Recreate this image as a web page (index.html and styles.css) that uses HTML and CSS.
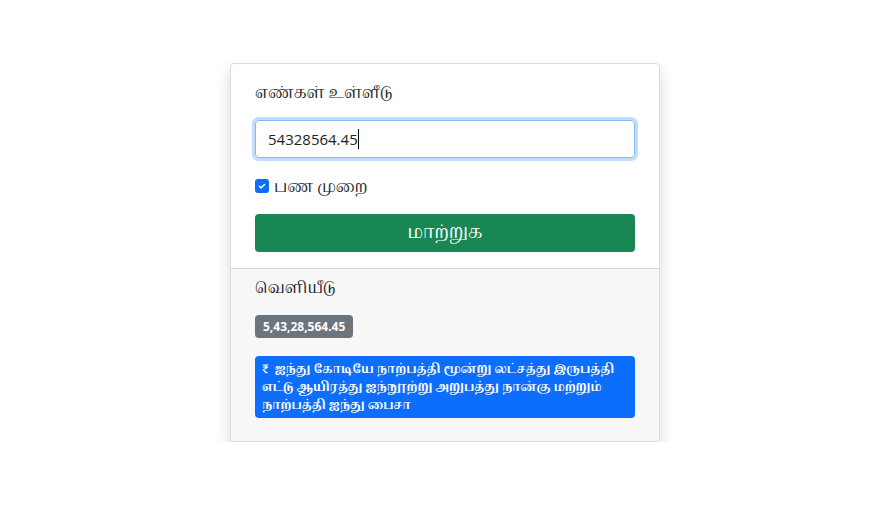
FILE: index.html
```html
<!DOCTYPE html>
<html lang="ta">
<head>
<meta charset="utf-8">
<link rel="stylesheet" href="styles.css">
</head>
<body>
<div class="wrap">
  <div class="card">
    <div class="card-body">
      <label class="lbl">எண்கள் உள்ளீடு</label>
      <div class="input"><span class="val">54328564.45</span><span class="caret"></span></div>
      <div class="check">
        <span class="box"><svg width="10" height="10" viewBox="0 0 20 20"><path d="M5 10.5l3.2 3.2L15 7" fill="none" stroke="#fff" stroke-width="3" stroke-linecap="round" stroke-linejoin="round"/></svg></span>
        <span class="check-label">பண முறை</span>
      </div>
      <button class="btn">மாற்றுக</button>
    </div>
    <div class="card-footer">
      <div class="out-label">வெளியீடு</div>
      <div class="badge-row"><span class="badge">5,43,28,564.45</span></div>
      <div class="result"><span class="line">₹ &nbsp;ஐந்து கோடியே நாற்பத்தி மூன்று லட்சத்து இருபத்தி</span><span class="line">எட்டு ஆயிரத்து ஐந்நூற்று அறுபத்து நான்கு மற்றும்</span><span class="line">நாற்பத்தி ஐந்து பைசா</span></div>
    </div>
  </div>
</div>
</body>
</html>
```

FILE: styles.css
```css
* { box-sizing: border-box; }
html, body { margin: 0; padding: 0; background: #fff; }
body {
  font-family: "Open Sans", "Arima", "Noto Sans Tamil", sans-serif;
  color: #212529;
  font-size: 16px;
}
.wrap {
  display: flex;
  justify-content: center;
  padding-top: 63px;
}
.card {
  width: 430px;
  border: 1px solid #dcdcdc;
  border-radius: 4px;
  background: #fff;
  box-shadow: 0 8px 16px rgba(0,0,0,0.15);
  overflow: hidden;
}
.card-body {
  padding: 16px 24px 16px 24px;
  display: flex;
  flex-direction: column;
}
.lbl {
  font-size: 16px;
  line-height: 24px;
  height: 24px;
  margin-bottom: 16px;
}
.input {
  height: 38px;
  border: 1px solid #86b7fe;
  border-radius: 4px;
  box-shadow: 0 0 0 3px #c2dbfe;
  padding: 0 12px;
  display: flex;
  align-items: center;
}
.val {
  font-size: 15px;
  color: #212529;
}
.caret {
  display: inline-block;
  width: 1px;
  height: 20px;
  background: #000;
}
.check {
  display: flex;
  align-items: center;
  height: 24px;
  margin-top: 16px;
  gap: 5px;
}
.box {
  width: 14px;
  height: 14px;
  border-radius: 3px;
  background: #0d6efd;
  display: flex;
  align-items: center;
  justify-content: center;
}
.check-label { font-size: 16px; line-height: 24px; }
.btn {
  margin-top: 16px;
  height: 38px;
  border: none;
  border-radius: 4px;
  background: #198754;
  color: #fff;
  font-family: inherit;
  font-size: 18px;
  padding: 0;
}
.card-footer {
  background: #f7f7f7;
  border-top: 1px solid #d9d9d9;
  padding: 6px 24px 23px 24px;
}
.out-label {
  font-size: 16px;
  line-height: 24px;
  height: 24px;
}
.badge-row { margin-top: 16px; height: 23px; display: flex; }
.badge {
  display: inline-block;
  background: #6c757d;
  color: #fff;
  font-weight: 700;
  font-size: 12px;
  line-height: 23px;
  height: 23px;
  padding: 0 8px;
  border-radius: 4px;
}
.result {
  margin-top: 18px;
  background: #0d6efd;
  color: #fff;
  font-weight: 700;
  font-size: 12px;
  line-height: 18px;
  padding: 4px 7px;
  border-radius: 4px;
  display: flex;
  flex-direction: column;
}
.line {
  white-space: nowrap;
  height: 18px;
}
```
